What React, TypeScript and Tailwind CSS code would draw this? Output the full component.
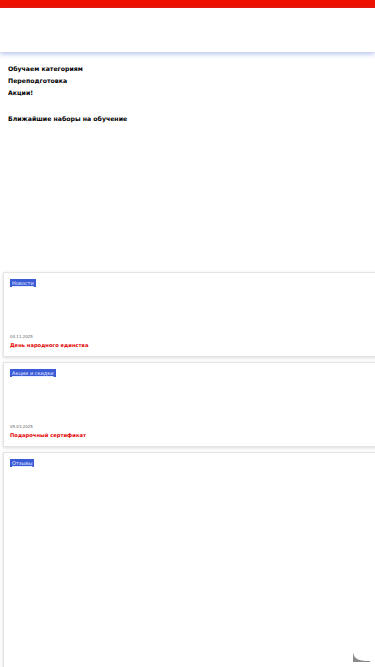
import React from "react";

function Card({ tag, date, title, h }: { tag: string; date?: string; title?: string; h: string }) {
  return (
    <div className={`ml-[3px] w-[380px] ${h} border border-[#e4e4e4] bg-white shadow-[0_1px_3px_rgba(0,0,0,0.15)] relative`}>
      <div className="absolute left-[6px] top-[6px] bg-[#3a5bd6] px-[2px] h-[8px] flex items-center">
        <span className="text-[5px] leading-none text-[#e8ecff] underline">{tag}</span>
      </div>
      {date && (
        <div className="absolute left-[6px] top-[62px] text-[4px] leading-none text-[#666]">{date}</div>
      )}
      {title && (
        <div className="absolute left-[6px] top-[70px] text-[5.2px] leading-none font-bold text-[#e30000]">{title}</div>
      )}
    </div>
  );
}

export default function App() {
  return (
    <div className="w-[375px] h-[667px] overflow-hidden bg-white relative" style={{ fontFamily: "'DejaVu Sans', sans-serif" }}>
      <div className="h-[8px] bg-[#ee1100]" />
      <div className="h-[44px] bg-white shadow-[0_2px_5px_rgba(90,120,220,0.45)] relative z-10" />
      <div className="pl-[8px] pt-[14px] text-[6.2px] font-bold text-black leading-none flex flex-col">
        <div className="h-[12px]">Обучаем категориям</div>
        <div className="h-[12px]">Переподготовка</div>
        <div className="h-[12px]">Акции!</div>
        <div className="mt-[14px] h-[12px]">Ближайшие наборы на обучение</div>
      </div>
      <div className="mt-[144px] flex flex-col gap-[5px]">
        <Card tag="Новости" date="04.11.2025" title="День народного единства" h="h-[85px]" />
        <Card tag="Акции и скидки" date="05.03.2025" title="Подарочный сертификат" h="h-[85px]" />
        <Card tag="Отзывы" h="h-[300px]" />
      </div>
      <svg className="absolute left-[352px] top-[652px]" width="20" height="12" viewBox="0 0 20 12">
        <path d="M1 0 L1 10 L18 10 L18 9 C8 9 2 8 1 0 Z" fill="#8a8a8a" />
      </svg>
    </div>
  );
}
